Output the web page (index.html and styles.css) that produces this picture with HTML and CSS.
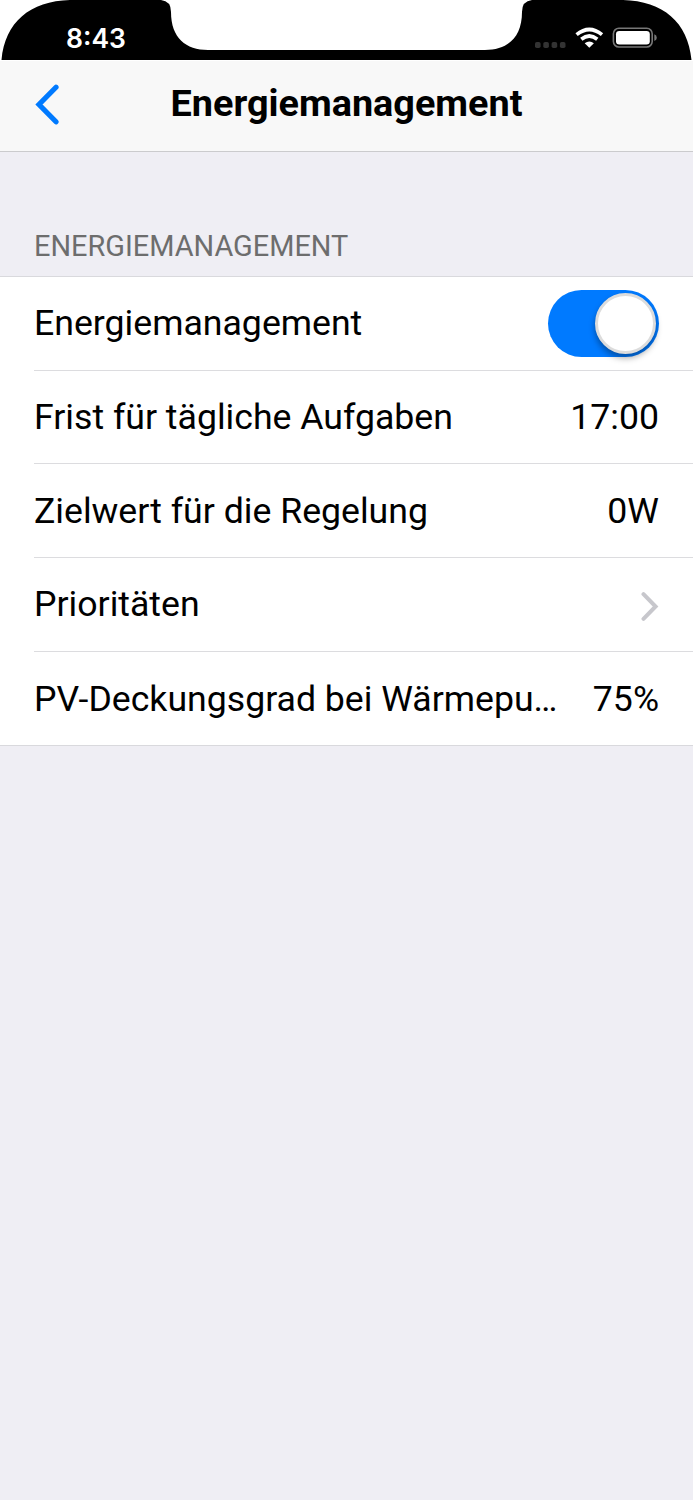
FILE: index.html
```html
<!DOCTYPE html>
<html lang="de">
<head>
  <meta charset="UTF-8">
  <meta name="viewport" content="width=device-width, initial-scale=1.0">
  <title>Energiemanagement</title>
  <link rel="stylesheet" href="styles.css">
</head>
<body>
  <div class="statusbar">
    <svg class="notch" width="693" height="60" viewBox="0 0 693 60">
      <path d="M1.5 60C5 22 30 1 70 0H161Q171 1 171 12C171 38 186 50 208 50H485C507 50 522 38 522 12Q522 1 532 0H623C663 1 688 22 691.5 60Z"/>
    </svg>
    <span class="time">8:43</span>
    <svg class="status-icons" width="124" height="24" viewBox="0 0 124 24">
      <g fill="#333">
        <rect x="1" y="16" width="5.6" height="6" rx="1.8"/>
        <rect x="9.3" y="16" width="5.6" height="6" rx="1.8"/>
        <rect x="17.6" y="16" width="5.6" height="6" rx="1.8"/>
        <rect x="25.9" y="16" width="5.6" height="6" rx="1.8"/>
      </g>
      <g fill="none" stroke="#fff" stroke-width="3.7">
        <path d="M42.6 8.6Q55.3 -1.6 68 8.6"/>
        <path d="M47.3 13.2Q55.3 6.8 63.3 13.2"/>
      </g>
      <path fill="#fff" d="M50.7 17.2Q55.3 13.6 59.9 17.2L55.3 21.8Z"/>
      <rect x="79.4" y="2.2" width="38.8" height="18.8" rx="5.5" fill="none" stroke="#777" stroke-width="1.6"/>
      <rect x="82" y="5" width="33.8" height="13.6" rx="3.3" fill="#fff"/>
      <path fill="#777" d="M120.3 8.3Q122.8 9.3 122.8 11.7Q122.8 14 120.3 15Z"/>
    </svg>
  </div>

  <header>
    <svg class="back" width="25" height="41" viewBox="0 0 25 41">
      <path d="M22 3.2L5 20.5L22 37.8"/>
    </svg>
    <h1>Energiemanagement</h1>
  </header>

  <main>
    <h2>ENERGIEMANAGEMENT</h2>
    <ul class="list">
      <li>
        <span class="label">Energiemanagement</span>
        <span class="toggle"><span class="knob"></span></span>
      </li>
      <li>
        <span class="label">Frist für tägliche Aufgaben</span>
        <span class="value">17:00</span>
      </li>
      <li>
        <span class="label">Zielwert für die Regelung</span>
        <span class="value">0W</span>
      </li>
      <li>
        <span class="label">Prioritäten</span>
        <svg class="arrow" width="18" height="29" viewBox="0 0 18 29">
          <path d="M2.5 2.2L14.6 14.5L2.5 26.8"/>
        </svg>
      </li>
      <li>
        <span class="label">PV-Deckungsgrad bei Wärmepu…</span>
        <span class="value">75%</span>
      </li>
    </ul>
  </main>
</body>
</html>
```
FILE: styles.css
```css
body {
  margin: 0;
  min-height: 1500px;
  background-color: #efeef4;
  font-family: Roboto, sans-serif;
  color: #000;
}
.statusbar {
  position: relative;
  display: flex;
  justify-content: space-between;
  height: 60px;
  padding: 0 35px 0 66px;
  box-sizing: border-box;
  background-color: #fff;
}
.notch {
  position: absolute;
  top: 0;
  left: 0;
}
.time {
  position: relative;
  margin-top: 21px;
  font-family: Inter, sans-serif;
  font-size: 26.5px;
  font-weight: 600;
  line-height: 34px;
  color: #fff;
}
.status-icons {
  position: relative;
  margin-top: 26px;
}
header {
  display: grid;
  grid-template-columns: 100px 1fr 100px;
  align-items: center;
  height: 92px;
  padding-bottom: 4px;
  box-sizing: border-box;
  background-color: #f8f8f8;
  border-top: 1px solid #fff;
  border-bottom: 1px solid #cbcbcd;
}
.back {
  margin-left: 34px;
  fill: none;
  stroke: #007aff;
  stroke-width: 5.2;
  stroke-linecap: round;
}
h1 {
  margin: 0 0 3px;
  font-size: 37.8px;
  font-weight: 700;
  line-height: 44px;
  text-align: center;
}
h2 {
  margin: 0;
  padding: 76px 34px 12px;
  font-size: 28.9px;
  font-weight: 400;
  line-height: 36px;
  color: #6d6d6d;
}
.list {
  margin: 0;
  padding: 0 0 0 34px;
  list-style: none;
  background-color: #fff;
  border-top: 1px solid #d9d9dd;
  border-bottom: 1px solid #d9d9dd;
}
.list li {
  display: flex;
  align-items: center;
  justify-content: space-between;
  height: 93.7px;
  padding-right: 34px;
  box-sizing: border-box;
  border-bottom: 1px solid #dcdcdf;
  font-size: 35.65px;
  line-height: 42px;
}
.list li:last-child {
  border-bottom: none;
}
.label, .value {
  white-space: nowrap;
}
.toggle {
  display: flex;
  justify-content: flex-end;
  width: 111px;
  height: 67px;
  padding: 3px 3px 3px 0;
  margin-top: 1px;
  box-sizing: border-box;
  border-radius: 34px;
  background-color: #007aff;
}
.knob {
  width: 61px;
  height: 61px;
  box-sizing: border-box;
  border: 3px solid #dcdcdc;
  border-radius: 50%;
  background-color: #fff;
  box-shadow: 0 4px 6px rgba(0, 0, 0, 0.35);
}
.arrow {
  margin-top: 4px;
  fill: none;
  stroke: #c7c7cc;
  stroke-width: 4;
  stroke-linecap: round;
}
```
